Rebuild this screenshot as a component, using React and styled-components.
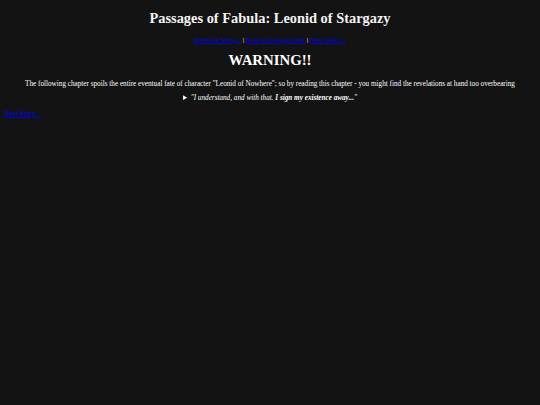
import React from "react";
import styled, { createGlobalStyle } from "styled-components";

const GlobalStyle = createGlobalStyle`
  html, body {
    margin: 0;
    padding: 0;
    background: #131313;
  }
  body {
    padding: 4px;
    font-family: "Liberation Serif", "Times New Roman", serif;
    color: #ffffff;
    font-size: 7.2px;
  }
`;

const Page = styled.div`
  min-height: 397px;
  display: flex;
  flex-direction: column;
`;

const Title = styled.h1`
  margin: 6px 0 0;
  text-align: center;
  font-size: 14.4px;
  font-weight: bold;
  color: #f4f4f4;
`;

const NavBar = styled.div`
  margin-top: 9px;
  text-align: center;
  font-size: 7.1px;
  color: #ffffff;
`;

const NavLink = styled.a`
  color: #0000ee;
  text-decoration: underline;
`;

const Warning = styled.h2`
  margin: 8px 0 0;
  text-align: center;
  font-size: 14.8px;
  font-weight: bold;
`;

const Notice = styled.p`
  margin: 11px 0 0;
  text-align: center;
`;

const Details = styled.details`
  margin-top: 6px;
  text-align: center;
  summary {
    font-style: italic;
    cursor: pointer;
  }
`;

const Footer = styled.div`
  margin-top: 8px;
`;

export default function App() {
  return (
    <Page>
      <GlobalStyle />
      <Title>Passages of Fabula: Leonid of Stargazy</Title>
      <NavBar>
        <NavLink href="#">Previous Story...</NavLink> |{" "}
        <NavLink href="#">Back to Chapter List</NavLink> |{" "}
        <NavLink href="#">Next Story...</NavLink>
      </NavBar>
      <Warning>WARNING!!</Warning>
      <Notice>
        The following chapter spoils the entire eventual fate of character
        "Leonid of Nowhere"; so by reading this chapter - you might find the
        revelations at hand too overbearing
      </Notice>
      <Details>
        <summary>
          "I understand, and with that. <b>I sign my existence away...</b>"
        </summary>
      </Details>
      <Footer>
        <NavLink href="#">Next Story...</NavLink>
      </Footer>
    </Page>
  );
}
